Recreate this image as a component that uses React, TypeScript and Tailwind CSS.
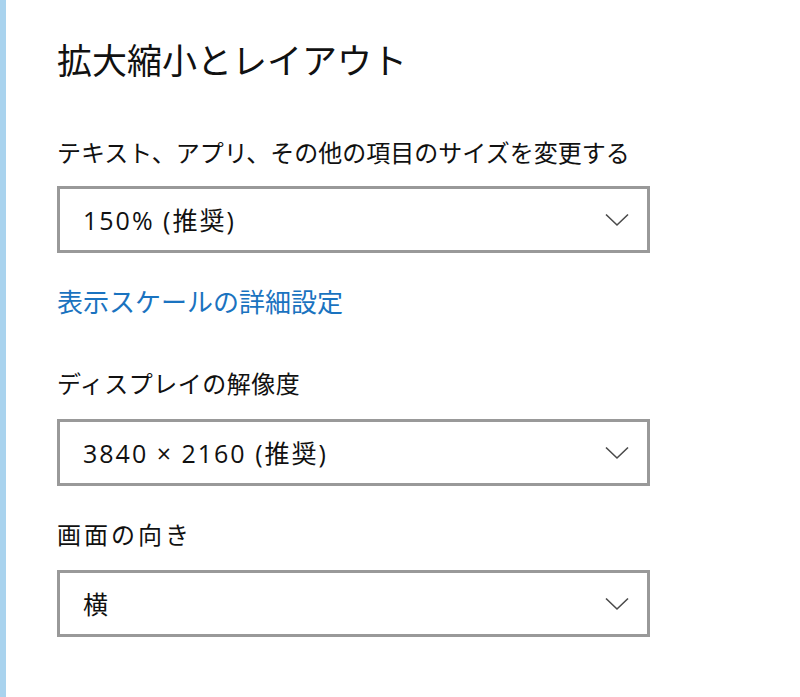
import React from "react";

const font = { fontFamily: '"Noto Sans CJK JP", "Noto Sans", sans-serif' };
const valueFont = { fontFamily: '"Open Sans", "Noto Sans CJK JP", sans-serif' };

function Chevron() {
  return (
    <svg width="24" height="14" viewBox="0 0 24 14" className="shrink-0">
      <path d="M1 1.5 L12 12 L23 1.5" fill="none" stroke="#4a4a4a" strokeWidth="1.6" />
    </svg>
  );
}

function Select({ value }: { value: string }) {
  return (
    <div className="flex items-center justify-between w-[593px] h-[67px] border-[3px] border-[#999999] bg-white pl-[23px] pr-[18px]">
      <span className="text-[25px] leading-[32px] text-[#111111] tracking-[2px]" style={valueFont}>
        {value}
      </span>
      <Chevron />
    </div>
  );
}

export default function App() {
  return (
    <div className="flex w-[800px] h-[697px] bg-white" style={font}>
      <div className="w-[6px] bg-[#a9d3ee] shrink-0" />
      <div className="flex flex-col pl-[51px] pt-[38px]">
        <h1 className="text-[35px] leading-[42px] text-[#111111] font-normal">拡大縮小とレイアウト</h1>
        <div className="mt-[56px] text-[24px] leading-[32px] text-[#111111]">
          テキスト、アプリ、その他の項目のサイズを変更する
        </div>
        <div className="mt-[18px]">
          <Select value="150% (推奨)" />
        </div>
        <a className="mt-[31px] text-[26px] leading-[34px] text-[#1a73c0]">表示スケールの詳細設定</a>
        <div className="mt-[49px] text-[24px] leading-[32px] text-[#111111] tracking-[0.5px]">ディスプレイの解像度</div>
        <div className="mt-[20px]">
          <Select value="3840 × 2160 (推奨)" />
        </div>
        <div className="mt-[32px] text-[24px] leading-[32px] text-[#111111] tracking-[3px]">画面の向き</div>
        <div className="mt-[20px]">
          <Select value="横" />
        </div>
      </div>
    </div>
  );
}
